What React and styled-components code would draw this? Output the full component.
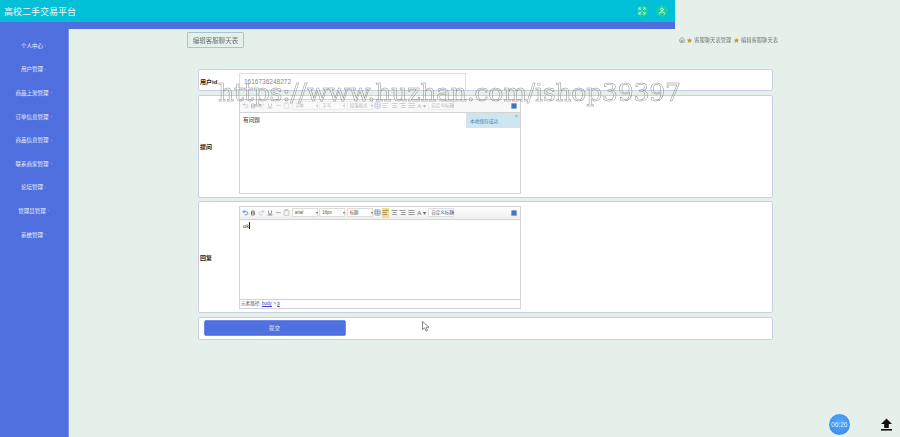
import React from "react";
import styled, { createGlobalStyle } from "styled-components";
import {
  Undo2,
  Redo2,
  Bold,
  Underline,
  Minus,
  Clipboard,
  Table,
  AlignLeft,
  AlignCenter,
  AlignRight,
  AlignJustify,
  Expand,
  User,
  Home,
  Star,
  ChevronRight,
} from "lucide-react";

const GlobalStyle = createGlobalStyle`
  html, body {
    margin: 0;
    padding: 0;
    height: 437px;
    overflow: hidden;
    background: #e6f0ea;
    font-family: "Liberation Sans", "Noto Sans CJK SC", sans-serif;
  }
  * { box-sizing: border-box; }
`;

const Page = styled.div`
  position: relative;
  width: 900px;
  height: 437px;
  overflow: hidden;
  filter: blur(0.25px);
`;

const TopBar = styled.div`
  width: 675px;
  height: 29px;
  background: #4f6fdf;
`;

const Header = styled.header`
  height: 22px;
  background: #00c0d8;
  display: flex;
  align-items: center;
  padding: 0 7.5px 0 4px;
`;

const Title = styled.div`
  flex: 1;
  color: #f2fbfd;
  font-size: 9px;
`;

const RoundIcon = styled.span`
  width: 11.5px;
  height: 11.5px;
  margin-left: 8px;
  border-radius: 50%;
  background: #10d0a0;
  color: #fff;
  display: flex;
  align-items: center;
  justify-content: center;
`;

const Body = styled.div`
  display: flex;
  height: 408px;
`;

const Sidebar = styled.nav`
  width: 69px;
  background: #4f6fdf;
  border-right: 1px solid #7d95e8;
  padding-top: 5px;
  display: flex;
  flex-direction: column;
`;

const NavItem = styled.div`
  height: 23.6px;
  display: flex;
  align-items: center;
  justify-content: center;
  gap: 1px;
  color: #eef2fd;
  font-size: 5.5px;
`;

const Main = styled.main`
  flex: 1;
  min-width: 0;
`;

const TitleRow = styled.div`
  display: flex;
  justify-content: space-between;
  padding: 3px 122px 0 118px;
  height: 40px;
`;

const PageTitle = styled.div`
  width: 57px;
  height: 16px;
  border: 1px solid #a8c4cc;
  border-radius: 1px;
  color: #6b7478;
  font-size: 6.5px;
  display: flex;
  align-items: center;
  justify-content: center;
`;

const Crumbs = styled.div`
  display: flex;
  align-items: center;
  gap: 2.3px;
  height: 10px;
  margin-top: 3px;
  color: #70787a;
  font-size: 5.3px;
`;

const Form = styled.form`
  width: 575px;
  margin-left: 129px;
  display: flex;
  flex-direction: column;
  gap: 3.5px;
`;

const Row = styled.div`
  height: ${(p) => p.$h}px;
  background: #fff;
  border: 1px solid #c9d0e2;
  border-radius: 2px;
  display: flex;
  align-items: ${(p) => (p.$top ? "flex-start" : "center")};
  position: relative;
`;

const Label = styled.label`
  width: 40px;
  margin-top: ${(p) => p.$mt || 0}px;
  padding-left: 1px;
  color: #222;
  font-size: 6px;
  font-weight: 700;
  flex: none;
`;

const IdInput = styled.div`
  width: 227px;
  height: 18px;
  margin-top: 3px;
  border: 1px solid #dde1e4;
  border-bottom: 0;
  padding: 4px 4px 0;
  color: #858a90;
  font-size: 6.5px;
`;

const Editor = styled.div`
  width: 282px;
  height: ${(p) => p.$h}px;
  border: 1px solid #d4d4d4;
  display: flex;
  flex-direction: column;
  position: relative;
`;

const Toolbar = styled.div`
  height: 13px;
  flex: none;
  background: ${(p) => (p.$dim ? "#f8f8f8" : "linear-gradient(#fdfdfd, #efefef)")};
  border-bottom: 1px solid #d4d4d4;
  display: flex;
  align-items: center;
  padding: 0 1.5px;
  gap: 1.4px;
  & > * {
    opacity: ${(p) => (p.$dim ? 0.42 : 1)};
  }
`;

const Tool = styled.span`
  width: ${(p) => p.$w || 7}px;
  height: 10px;
  display: flex;
  align-items: center;
  justify-content: center;
  color: ${(p) => p.$color || "#555"};
  background: ${(p) => (p.$active ? "#f7d795" : "transparent")};
  flex: none;
  font-size: 6px;
`;

const Pick = styled.span`
  width: ${(p) => p.$w}px;
  height: 9px;
  background: #fff;
  border: 1px solid #ddd;
  padding-left: 2px;
  color: #555;
  font-size: 4.5px;
  line-height: 7px;
  white-space: nowrap;
  flex: none;
  position: relative;
  &::after {
    content: "";
    position: absolute;
    right: -1px;
    top: 3px;
    border-left: 1.5px solid transparent;
    border-right: 1.5px solid transparent;
    border-top: 2px solid #666;
  }
`;

const FullIcon = styled.span`
  width: 6px;
  height: 6px;
  margin-left: auto;
  margin-right: 2px;
  border-radius: 1px;
  background: #4a72c4;
  border: 1px solid #8aa4dc;
  flex: none;
  && {
    opacity: 1;
  }
`;

const EditArea = styled.div`
  flex: 1;
  padding: 2px 3px;
  color: #333;
  font-size: 5.7px;
`;

const Caret = styled.span`
  display: inline-block;
  width: 1px;
  height: 7px;
  background: #222;
  vertical-align: -1px;
`;

const PathBar = styled.div`
  height: 9px;
  flex: none;
  border-top: 1px solid #d4d4d4;
  padding-left: 1px;
  color: #555;
  font-size: 4.6px;
  line-height: 8px;
  & b {
    color: #3a3ac0;
    font-weight: 400;
    text-decoration: underline;
  }
`;

const SavedTip = styled.div`
  position: absolute;
  top: 13px;
  right: 0;
  width: 54px;
  height: 15px;
  background: #cfe6f2;
  color: #3a84a8;
  font-size: 4.7px;
  padding: 5px 0 0 4px;
  &::after {
    content: "×";
    position: absolute;
    top: 0;
    right: 2px;
    color: #8a9aa4;
    font-size: 6px;
  }
`;

const SubmitButton = styled.button`
  width: 142px;
  height: 16px;
  margin-left: 4.5px;
  border: 1px solid #6d8ae6;
  border-radius: 2px;
  background: #4f70e0;
  color: #dfe6fb;
  font-family: inherit;
  font-size: 5.5px;
  padding: 0;
`;

const Watermark = styled.div`
  position: absolute;
  left: 218px;
  top: 75px;
  color: transparent;
  font-family: "DejaVu Serif", serif;
  font-size: 25px;
  letter-spacing: -0.18px;
  line-height: 36px;
  white-space: nowrap;
  -webkit-text-stroke: 0.5px #8d8d8d;
`;

const Clock = styled.div`
  position: absolute;
  left: 829px;
  top: 414px;
  width: 21px;
  height: 21px;
  border-radius: 50%;
  background: radial-gradient(circle at 50% 40%, #5aa8fa, #2f86f0);
  box-shadow: 0 0 1px #fff;
  color: #e2efff;
  font-size: 6.5px;
  display: flex;
  align-items: center;
  justify-content: center;
`;

const CornerIcon = styled.svg`
  position: absolute;
  left: ${(p) => p.$x}px;
  top: ${(p) => p.$y}px;
`;

const menus = [
  "个人中心",
  "用户管理",
  "商品上架管理",
  "订单信息管理",
  "商品信息管理",
  "联系商家管理",
  "论坛管理",
  "管理员管理",
  "系统管理",
];

const EditorTools = ({ dim, font, size, para, custom }) => (
  <Toolbar $dim={dim}>
    <Tool $color="#3f7fd0"><Undo2 size={7} strokeWidth={2.5} /></Tool>
    <Tool><Bold size={6} strokeWidth={3} /></Tool>
    <Tool $color="#a9c8ea"><Redo2 size={7} strokeWidth={2.5} /></Tool>
    <Tool><Underline size={6} strokeWidth={2.5} /></Tool>
    <Tool $color="#888"><Minus size={7} /></Tool>
    <Tool $color="#aaa"><Clipboard size={7} /></Tool>
    <Pick $w={26}>{font}</Pick>
    <Pick $w={26}>{size}</Pick>
    <Pick $w={26}>{para}</Pick>
    <Tool $color="#5a86c8"><Table size={7} /></Tool>
    <Tool $active={!dim} $color="#7a6a30"><AlignLeft size={7} /></Tool>
    <Tool><AlignCenter size={7} /></Tool>
    <Tool><AlignRight size={7} /></Tool>
    <Tool><AlignJustify size={7} /></Tool>
    <Tool $w={11} $color="#666">A ▾</Tool>
    <Pick $w={26}>{custom}</Pick>
    <FullIcon />
  </Toolbar>
);

export default function App() {
  return (
    <Page>
      <GlobalStyle />
      <TopBar>
        <Header>
          <Title>高校二手交易平台</Title>
          <RoundIcon><Expand size={8} strokeWidth={2.2} /></RoundIcon>
          <RoundIcon><User size={8} strokeWidth={2.2} /></RoundIcon>
        </Header>
      </TopBar>
      <Body>
        <Sidebar>
          {menus.map((m) => (
            <NavItem key={m}>
              {m}
              <ChevronRight size={3} />
            </NavItem>
          ))}
        </Sidebar>
        <Main>
          <TitleRow>
            <PageTitle>编辑客服聊天表</PageTitle>
            <Crumbs>
              <Home size={6} color="#666" />
              <Star size={5} fill="#c09a20" color="#c09a20" />
              客服聊天表管理
              <Star size={5} fill="#c09a20" color="#c09a20" />
              编辑客服聊天表
            </Crumbs>
          </TitleRow>
          <Form>
            <Row $h={22} $top>
              <Label $mt={7}>用户id</Label>
              <IdInput>1616736248272</IdInput>
            </Row>
            <Row $h={103}>
              <Label>提问</Label>
              <Editor $h={95}>
                <EditorTools dim font="字体" size="字号" para="段落格式" custom="自定义标题" />
                <EditArea>有问题</EditArea>
                <SavedTip>本地保存成功</SavedTip>
              </Editor>
            </Row>
            <Row $h={112}>
              <Label>回复</Label>
              <Editor $h={103}>
                <EditorTools font="arial" size="16px" para="标题" custom="自定义标题" />
                <EditArea>ok<Caret /></EditArea>
                <PathBar>元素路径: <b>body</b> &gt; <b>p</b></PathBar>
              </Editor>
            </Row>
            <Row $h={23}>
              <SubmitButton type="button">提交</SubmitButton>
            </Row>
          </Form>
        </Main>
      </Body>
      <Watermark>https://www.huzhan.com/ishop39397</Watermark>
      <CornerIcon $x={422} $y={321} width="8" height="11" viewBox="0 0 8 11">
        <path d="M0.5 0.5 L0.5 8.5 L2.5 6.8 L4 10 L5.5 9.3 L4.2 6.3 L7 6.2 Z" fill="#fff" stroke="#555" strokeWidth="0.7" />
      </CornerIcon>
      <Clock>06:26</Clock>
      <CornerIcon $x={880} $y={418} width="13" height="13" viewBox="0 0 13 13">
        <path d="M6.5 0.5 L12 6 L8.8 6 L8.8 10 L4.2 10 L4.2 6 L1 6 Z" fill="#111" />
        <rect x="1" y="11" width="11" height="1.6" fill="#111" />
      </CornerIcon>
    </Page>
  );
}
